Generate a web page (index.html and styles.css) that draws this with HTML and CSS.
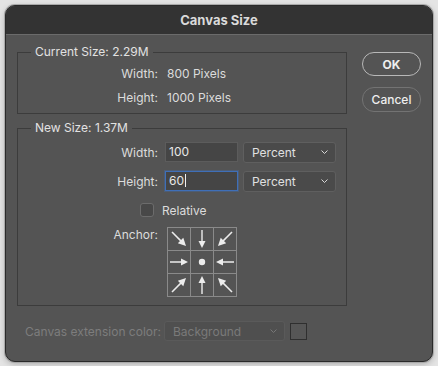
FILE: index.html
```html
<!DOCTYPE html>
<html lang="en">
<head>
    <meta charset="UTF-8">
    <title>Canvas Size</title>
    <link rel="stylesheet" href="styles.css">
</head>
<body>
    <div class="window">
        <div class="titlebar">Canvas Size</div>
        <div class="content">
            <div class="main">
                <fieldset class="group">
                    <legend>Current Size: 2.29M</legend>
                    <div class="info">
                        <span class="lbl">Width:</span><span>800 Pixels</span>
                        <span class="lbl">Height:</span><span>1000 Pixels</span>
                    </div>
                </fieldset>
                <fieldset class="group group-new">
                    <legend>New Size: 1.37M</legend>
                    <div class="form">
                        <span class="lbl">Width:</span>
                        <div class="field">100</div>
                        <div class="select"><span>Percent</span><svg width="7" height="4" viewBox="0 0 7 4"><path d="M0.5 0.5 L3.5 3.5 L6.5 0.5" fill="none" stroke="#d8d8d8" stroke-width="1"/></svg></div>
                        <span class="lbl">Height:</span>
                        <div class="field focus">60<i class="caret"></i></div>
                        <div class="select"><span>Percent</span><svg width="7" height="4" viewBox="0 0 7 4"><path d="M0.5 0.5 L3.5 3.5 L6.5 0.5" fill="none" stroke="#d8d8d8" stroke-width="1"/></svg></div>
                    </div>
                    <div class="check-row">
                        <span class="checkbox"></span><span>Relative</span>
                    </div>
                    <div class="anchor-row">
                        <span class="anchor-lbl">Anchor:</span>
                        <svg class="anchor" width="70" height="70" viewBox="0 0 70 70">
                            <defs>
                                <g id="arr">
                                    <line x1="0" y1="-9" x2="0" y2="3" stroke="#ececec" stroke-width="1.4"/>
                                    <polygon points="-3.5,2 3.5,2 0,9" fill="#ececec"/>
                                </g>
                            </defs>
                            <g stroke="#8a8a8a" stroke-width="1" fill="none">
                                <rect x="0.5" y="0.5" width="69" height="69"/>
                                <line x1="23.5" y1="0" x2="23.5" y2="70"/>
                                <line x1="46.5" y1="0" x2="46.5" y2="70"/>
                                <line x1="0" y1="23.5" x2="70" y2="23.5"/>
                                <line x1="0" y1="46.5" x2="70" y2="46.5"/>
                            </g>
                            <use href="#arr" transform="translate(12 12) rotate(-45) scale(1.1)"/>
                            <use href="#arr" transform="translate(35 12)"/>
                            <use href="#arr" transform="translate(58 12) rotate(45) scale(1.1)"/>
                            <use href="#arr" transform="translate(12 35) rotate(-90)"/>
                            <circle cx="35" cy="35" r="3.2" fill="#ececec"/>
                            <use href="#arr" transform="translate(58 35) rotate(90)"/>
                            <use href="#arr" transform="translate(12 58) rotate(-135) scale(1.1)"/>
                            <use href="#arr" transform="translate(35 58) rotate(180)"/>
                            <use href="#arr" transform="translate(58 58) rotate(135) scale(1.1)"/>
                        </svg>
                    </div>
                </fieldset>
            </div>
            <div class="buttons">
                <div class="btn btn-ok">OK</div>
                <div class="btn btn-cancel">Cancel</div>
            </div>
        </div>
        <div class="footer">
            <span class="footer-lbl">Canvas extension color:</span>
            <div class="select disabled"><span>Background</span><svg width="7" height="4" viewBox="0 0 7 4"><path d="M0.5 0.5 L3.5 3.5 L6.5 0.5" fill="none" stroke="#777" stroke-width="1"/></svg></div>
            <span class="swatch"></span>
        </div>
    </div>
</body>
</html>
```

FILE: styles.css
```css
* {
    box-sizing: border-box;
}
body {
    margin: 0;
    background: #e4e4e4;
    font-family: Inter, "Liberation Sans", sans-serif;
    font-size: 12px;
    color: #dcdcdc;
}
.window {
    margin: 5px;
    width: 428px;
    height: 357px;
    background: #545454;
    border: 1px solid #2a2a2a;
    border-radius: 10px;
    box-shadow: 0 0 0 1px #a9a9a9, 0 2px 6px rgba(0, 0, 0, .25);
    overflow: hidden;
}
.titlebar {
    height: 29px;
    background: #333333;
    border-bottom: 1px solid #6b6b6b;
    display: flex;
    align-items: center;
    justify-content: center;
    font-weight: 700;
    font-size: 13px;
    color: #dadada;
}
.content {
    display: flex;
    padding: 10px 0 0 11px;
}
.main {
    width: 330px;
}
.group {
    margin: 0;
    padding: 2px 0 4px;
    border: 1px solid #3c3c3c;
    min-width: 0;
}
.group legend {
    margin-left: 13px;
    padding: 0 4px;
    line-height: 14px;
    color: #e2e2e2;
}
.info {
    display: grid;
    grid-template-columns: 140px 1fr;
    grid-auto-rows: 24px;
    column-gap: 9px;
    align-items: center;
}
.lbl {
    text-align: right;
}
.group-new {
    margin-top: 7px;
    padding: 7px 0 8px;
}
.form {
    display: grid;
    grid-template-columns: 142px 73px 93px;
    grid-auto-rows: 20px;
    column-gap: 5px;
    row-gap: 9px;
    align-items: center;
}
.form .lbl {
    padding-right: 2px;
}
.field {
    height: 20px;
    line-height: 18px;
    padding-left: 3px;
    background: #454545;
    border: 1px solid #5c5c5c;
    color: #e8e8e8;
}
.field.focus {
    border-color: #3f6fb8;
    box-shadow: 0 0 0 1px rgba(63, 111, 184, .35);
}
.caret {
    display: inline-block;
    width: 1px;
    height: 13px;
    background: #f0f0f0;
    vertical-align: -2px;
    margin-left: 1px;
}
.select {
    height: 21px;
    display: flex;
    align-items: center;
    justify-content: space-between;
    padding: 0 7px 0 8px;
    background: #4a4a4a;
    border: 1px solid #5f5f5f;
    border-radius: 3px;
    color: #e0e0e0;
}
.check-row {
    display: flex;
    align-items: center;
    height: 20px;
    margin-top: 9px;
    padding-left: 122px;
}
.checkbox {
    width: 14px;
    height: 14px;
    background: #484848;
    border: 1px solid #6c6c6c;
    border-radius: 3px;
    margin-right: 8px;
}
.anchor-row {
    display: flex;
    align-items: flex-start;
    margin-top: 7px;
}
.anchor-lbl {
    width: 140px;
    text-align: right;
    line-height: 14px;
    margin-top: 1px;
}
.anchor {
    display: block;
    margin-left: 9px;
}
.buttons {
    width: 59px;
    margin-left: 15px;
    margin-top: 7px;
}
.btn {
    height: 24px;
    border-radius: 12px;
    display: flex;
    align-items: center;
    justify-content: center;
    color: #eeeeee;
}
.btn-ok {
    border: 1px solid #b8b8b8;
    font-weight: 700;
}
.btn-cancel {
    margin-top: 11px;
    height: 25px;
    border: 1px solid #737373;
    font-weight: 500;
}
.footer {
    display: flex;
    align-items: center;
    margin-top: 15px;
    padding-left: 19px;
    color: #7d7d7d;
}
.footer-lbl {
    width: 139px;
    white-space: nowrap;
}
.select.disabled {
    width: 121px;
    height: 20px;
    background: #4f4f4f;
    border-color: #5a5a5a;
    color: #7a7a7a;
}
.swatch {
    width: 17px;
    height: 17px;
    margin-left: 5px;
    border: 1px solid #2f2f2f;
    background: #565656;
}
```
